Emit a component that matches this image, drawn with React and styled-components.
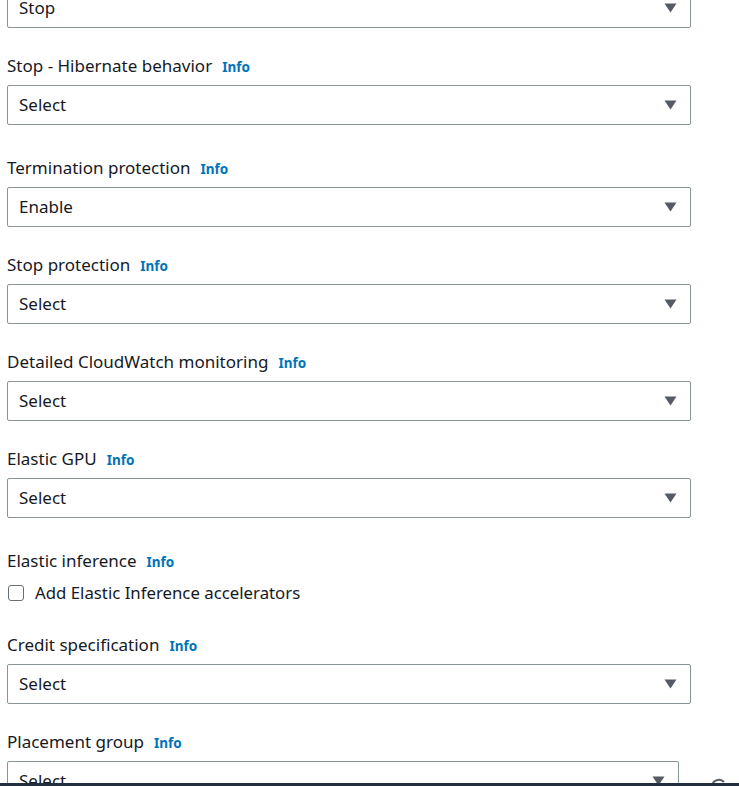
import React from "react";
import styled, { createGlobalStyle } from "styled-components";

const Global = createGlobalStyle`
  html, body { margin: 0; padding: 0; background: #ffffff; overflow: hidden; }
  body { font-family: "Noto Sans", "Open Sans", Arial, sans-serif; color: #16191f; }
`;

const Page = styled.div`
  width: 739px;
  height: 786px;
  overflow: hidden;
  position: relative;
`;

const Form = styled.div`
  display: flex;
  flex-direction: column;
  padding-left: 7px;
  margin-top: -12px;
`;

const Field = styled.div`
  display: flex;
  flex-direction: column;
  margin-top: ${(p) => p.$gap ?? 26}px;
`;

const Label = styled.div`
  display: flex;
  align-items: baseline;
  gap: 10px;
  font-size: 17px;
  line-height: 22px;
  color: #16191f;
  padding-top: 1px;
  margin-bottom: 7px;
`;

const Info = styled.a`
  font-size: 13.5px;
  font-weight: 700;
  color: #0073bb;
  text-decoration: none;
`;

const SelectBox = styled.div`
  box-sizing: border-box;
  width: ${(p) => p.$width ?? 684}px;
  height: 40px;
  border: 1px solid #879596;
  border-radius: 2px;
  display: flex;
  align-items: center;
  justify-content: space-between;
  padding: 0 13px 1px 11px;
  font-size: 17px;
  color: #16191f;
  background: #fff;
`;

const Caret = styled.svg`
  width: 13px;
  height: 10px;
  flex: none;
`;

const CheckRow = styled.label`
  display: flex;
  align-items: center;
  gap: 11px;
  font-size: 16.8px;
  line-height: 22px;
  margin-top: 2px;
`;

const Box = styled.span`
  box-sizing: border-box;
  width: 16px;
  height: 16px;
  margin-left: 1px;
  border: 1px solid #687078;
  border-radius: 3px;
  background: #fff;
`;

const BottomBar = styled.div`
  position: absolute;
  left: 0;
  right: 0;
  bottom: 0;
  height: 3px;
  background: #232f3e;
`;

const PeekIcon = styled.svg`
  position: absolute;
  left: 708px;
  top: 776px;
  width: 22px;
  height: 22px;
`;

const Select = ({ value, width }) => (
  <SelectBox $width={width}>
    <span>{value}</span>
    <Caret viewBox="0 0 13 10">
      <path d="M0.5 0.5 H12.5 L6.5 9.5 Z" fill="#545b64" />
    </Caret>
  </SelectBox>
);

const fields = [
  { label: "Stop - Hibernate behavior", value: "Select", gap: 26 },
  { label: "Termination protection", value: "Enable", gap: 31 },
  { label: "Stop protection", value: "Select", gap: 26 },
  { label: "Detailed CloudWatch monitoring", value: "Select", gap: 26 },
  { label: "Elastic GPU", value: "Select", gap: 26 },
];

export default function App() {
  return (
    <Page>
      <Global />
      <Form>
        <Select value="Stop" />
        {fields.map((f) => (
          <Field key={f.label} $gap={f.gap}>
            <Label>
              {f.label}
              <Info>Info</Info>
            </Label>
            <Select value={f.value} />
          </Field>
        ))}
        <Field $gap={31}>
          <Label>
            Elastic inference
            <Info>Info</Info>
          </Label>
          <CheckRow>
            <Box />
            Add Elastic Inference accelerators
          </CheckRow>
        </Field>
        <Field $gap={29}>
          <Label>
            Credit specification
            <Info>Info</Info>
          </Label>
          <Select value="Select" />
        </Field>
        <Field $gap={26}>
          <Label>
            Placement group
            <Info>Info</Info>
          </Label>
          <Select value="Select" width={672} />
        </Field>
      </Form>
      <PeekIcon viewBox="0 0 22 22">
        <path d="M4 11a7 7 0 0 1 12-5" fill="none" stroke="#545b64" strokeWidth="2" />
      </PeekIcon>
      <BottomBar />
    </Page>
  );
}
